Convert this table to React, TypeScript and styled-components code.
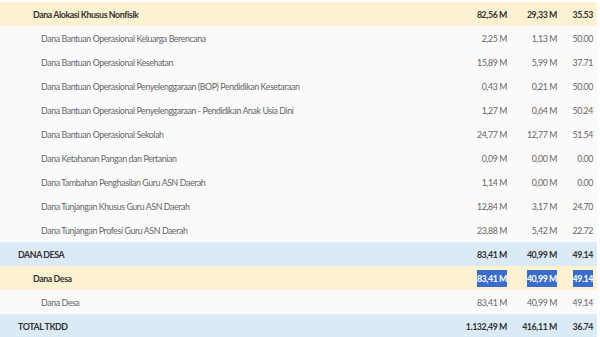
import styled, { createGlobalStyle } from "styled-components";

const GlobalStyle = createGlobalStyle`
  html, body {
    margin: 0;
    padding: 0;
    background: #fff;
  }
  body {
    font-family: Lato, "Noto Sans", sans-serif;
  }
`

type Level = 1 | 2 | 3
type Tone = "blue" | "yellow" | "plain"

interface RowData {
  label: string
  pagu: string
  realisasi: string
  persen: string
  level: Level
  tone: Tone
  selected?: boolean
}

const rows: RowData[] = [
  {label: "Dana Alokasi Khusus Nonfisik", pagu: "82,56 M", realisasi: "29,33 M", persen: "35.53", level: 2, tone: "yellow"},
  {label: "Dana Bantuan Operasional Keluarga Berencana", pagu: "2,25 M", realisasi: "1,13 M", persen: "50.00", level: 3, tone: "plain"},
  {label: "Dana Bantuan Operasional Kesehatan", pagu: "15,89 M", realisasi: "5,99 M", persen: "37.71", level: 3, tone: "plain"},
  {label: "Dana Bantuan Operasional Penyelenggaraan (BOP) Pendidikan Kesetaraan", pagu: "0,43 M", realisasi: "0,21 M", persen: "50.00", level: 3, tone: "plain"},
  {label: "Dana Bantuan Operasional Penyelenggaraan - Pendidikan Anak Usia Dini", pagu: "1,27 M", realisasi: "0,64 M", persen: "50.24", level: 3, tone: "plain"},
  {label: "Dana Bantuan Operasional Sekolah", pagu: "24,77 M", realisasi: "12,77 M", persen: "51.54", level: 3, tone: "plain"},
  {label: "Dana Ketahanan Pangan dan Pertanian", pagu: "0,09 M", realisasi: "0,00 M", persen: "0.00", level: 3, tone: "plain"},
  {label: "Dana Tambahan Penghasilan Guru ASN Daerah", pagu: "1,14 M", realisasi: "0,00 M", persen: "0.00", level: 3, tone: "plain"},
  {label: "Dana Tunjangan Khusus Guru ASN Daerah", pagu: "12,84 M", realisasi: "3,17 M", persen: "24.70", level: 3, tone: "plain"},
  {label: "Dana Tunjangan Profesi Guru ASN Daerah", pagu: "23,88 M", realisasi: "5,42 M", persen: "22.72", level: 3, tone: "plain"},
  {label: "DANA DESA", pagu: "83,41 M", realisasi: "40,99 M", persen: "49.14", level: 1, tone: "blue"},
  {label: "Dana Desa", pagu: "83,41 M", realisasi: "40,99 M", persen: "49.14", level: 2, tone: "yellow", selected: true},
  {label: "Dana Desa", pagu: "83,41 M", realisasi: "40,99 M", persen: "49.14", level: 3, tone: "plain"},
  {label: "TOTAL TKDD", pagu: "1.132,49 M", realisasi: "416,11 M", persen: "36.74", level: 1, tone: "blue"},
]

const indent: Record<Level, number> = {1: 18, 2: 33, 3: 41}
const toneBg: Record<Tone, string> = {blue: "#dbeaf7", yellow: "#fcf2d2", plain: "#fafafa"}

export default function App() {
  return (
    <>
      <GlobalStyle/>
      <Table>
        {rows.map((r, i) => (
          <Row key={i} $tone={r.tone} $bold={r.level < 3}>
            <Label $indent={indent[r.level]}>{r.label}</Label>
            <Num>{r.selected ? <Selected>{r.pagu}</Selected> : r.pagu}</Num>
            <Num>{r.selected ? <Selected>{r.realisasi}</Selected> : r.realisasi}</Num>
            <Num>{r.selected ? <Selected>{r.persen}</Selected> : r.persen}</Num>
          </Row>
        ))}
      </Table>
    </>
  )
}

const Table = styled.div`
  width: 597px;
  padding-top: 2px;
  display: flex;
  flex-direction: column;
`

const Row = styled.div<{ $tone: Tone, $bold: boolean }>`
  display: grid;
  grid-template-columns: 1fr 60px 50px 36px;
  align-items: center;
  height: 24px;
  padding-right: 4px;
  background: ${p => toneBg[p.$tone]};
  color: ${p => p.$bold ? "#333" : "#666"};
  font-weight: ${p => p.$bold ? 700 : 400};
  font-size: 8.8px;
  letter-spacing: -0.4px;
`

const Label = styled.div<{ $indent: number }>`
  padding-left: ${p => p.$indent}px;
  white-space: nowrap;
`

const Num = styled.div`
  text-align: right;
  white-space: nowrap;
`

const Selected = styled.span`
  background: #3a6ccc;
  color: #fff;
  padding: 3px 0;
`
